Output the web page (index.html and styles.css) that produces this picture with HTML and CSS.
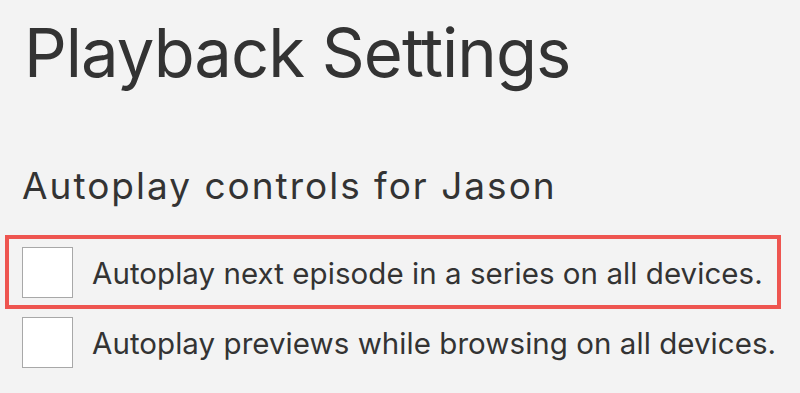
FILE: index.html
```html
<!DOCTYPE html>
<html>
<head>
<meta charset="utf-8">
<link rel="stylesheet" href="styles.css">
</head>
<body>
<main class="page">
  <h1 class="title">Playback Settings</h1>
  <h2 class="subtitle">Autoplay controls for Jason</h2>
  <div class="options">
    <label class="option option-highlight">
      <span class="box"></span>
      <span class="label">Autoplay next episode in a series on all devices.</span>
    </label>
    <label class="option">
      <span class="box"></span>
      <span class="label">Autoplay previews while browsing on all devices.</span>
    </label>
  </div>
</main>
</body>
</html>
```

FILE: styles.css
```css
html, body {
  margin: 0;
  padding: 0;
  background: #f3f3f3;
}
body {
  font-family: Inter, Roboto, "Liberation Sans", sans-serif;
  color: #333333;
}
.page {
  padding: 0 0 0 9px;
}
.title {
  margin: 0;
  padding: 12px 0 0 15px;
  font-size: 67px;
  font-weight: 400;
  letter-spacing: -1px;
  line-height: 82px;
}
.subtitle {
  margin: 0;
  padding: 70px 0 0 13px;
  font-size: 37px;
  font-weight: 400;
  letter-spacing: 2px;
  line-height: 44px;
}
.options {
  display: flex;
  flex-direction: column;
  gap: 4px;
  padding-top: 31px;
}
.option {
  display: flex;
  align-items: center;
  gap: 19px;
  width: 768px;
  height: 66px;
  box-sizing: border-box;
  padding: 0 0 0 13px;
}
.option-highlight {
  outline: 4px solid #ee5550;
}
.box {
  width: 51px;
  height: 51px;
  box-sizing: border-box;
  background: #ffffff;
  border: 1px solid #a8a8a8;
  flex: none;
}
.label {
  padding-top: 2px;
  font-size: 29.5px;
  letter-spacing: 0.05px;
  line-height: 34px;
  white-space: nowrap;
}
```
